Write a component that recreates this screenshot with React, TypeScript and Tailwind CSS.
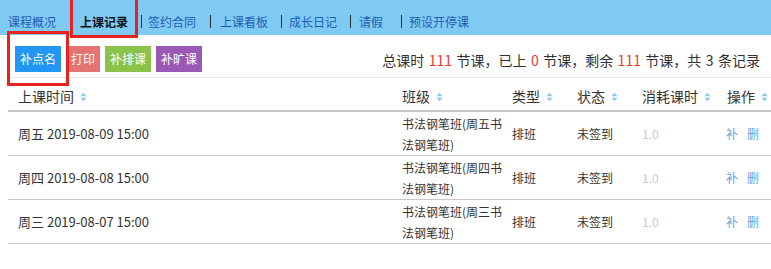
import React from 'react';

interface LessonRow {
  time: string;
  klass: [string, string];
  kind: string;
  status: string;
  hours: string;
}

const rows: LessonRow[] = [
  { time: '周五 2019-08-09 15:00', klass: ['书法钢笔班(周五书', '法钢笔班)'], kind: '排班', status: '未签到', hours: '1.0' },
  { time: '周四 2019-08-08 15:00', klass: ['书法钢笔班(周四书', '法钢笔班)'], kind: '排班', status: '未签到', hours: '1.0' },
  { time: '周三 2019-08-07 15:00', klass: ['书法钢笔班(周三书', '法钢笔班)'], kind: '排班', status: '未签到', hours: '1.0' },
];

function SortIcon() {
  return (
    <svg width="7" height="10" viewBox="0 0 7 10" className="ml-[6px] mt-[1px] shrink-0">
      <path d="M3.5 0.8 L6.6 4.2 H0.4 Z" fill="#8fcbea" />
      <path d="M3.5 9.2 L6.6 5.8 H0.4 Z" fill="#8fcbea" />
    </svg>
  );
}

function Sep({ className }: { className: string }) {
  return <div className={`w-px h-[13px] bg-[#2b2b2b] ${className}`} />;
}

export default function App() {
  return (
    <div className="relative w-[771px] h-[269px] overflow-hidden bg-white font-['Noto_Sans_CJK_SC','Microsoft_YaHei',sans-serif] text-[#333]">
      {/* tabs */}
      <div className="h-[35px] bg-[#7ecaf3] flex items-center pt-[8px] text-[12px] text-[#1e5db3] whitespace-nowrap">
        <span className="ml-[8px]">课程概况</span>
        <span className="ml-[24px] font-bold text-[#111]">上课记录</span>
        <Sep className="ml-[13px]" />
        <span className="ml-[6px]">签约合同</span>
        <Sep className="ml-[14px]" />
        <span className="ml-[9px]">上课看板</span>
        <Sep className="ml-[13px]" />
        <span className="ml-[7px]">成长日记</span>
        <Sep className="ml-[13px]" />
        <span className="ml-[8px]">请假</span>
        <Sep className="ml-[18px]" />
        <span className="ml-[7px]">预设开停课</span>
      </div>

      {/* toolbar */}
      <div className="h-[42px] flex items-start pt-[11px] pl-[15px] pr-[11px]">
        <div className="flex gap-[5px] text-[12px] text-white">
          <button type="button" className="h-[26px] px-[5px] leading-[26px] bg-[#2196f3]">补点名</button>
          <button type="button" className="h-[26px] px-[5px] leading-[26px] bg-[#e57373]">打印</button>
          <button type="button" className="h-[26px] px-[5px] leading-[26px] bg-[#8bc34a]">补排课</button>
          <button type="button" className="h-[26px] px-[5px] leading-[26px] bg-[#9b59b6]">补旷课</button>
        </div>
        <p className="ml-auto mt-[1px] text-[14px] leading-[26px] whitespace-nowrap [word-spacing:1.3px]">
          总课时 <span className="text-[#e53935]">111</span> 节课，已上 <span className="text-[#e53935]">0</span> 节课，剩余{' '}
          <span className="text-[#e53935]">111</span> 节课，共 3 条记录
        </p>
      </div>

      {/* table */}
      <div className="ml-[8px] w-[790px] border-t border-[#e6e6e6]">
        <div className="h-[34px] pt-[4px] flex items-center border-b-2 border-[#c6c6c6] text-[14px] whitespace-nowrap">
          <div className="w-[384px] pl-[10px] flex items-center">上课时间<SortIcon /></div>
          <div className="w-[110px] pl-[10px] flex items-center">班级<SortIcon /></div>
          <div className="w-[65px] pl-[10px] flex items-center">类型<SortIcon /></div>
          <div className="w-[65px] pl-[10px] flex items-center">状态<SortIcon /></div>
          <div className="w-[85px] pl-[10px] flex items-center">消耗课时<SortIcon /></div>
          <div className="w-[80px] pl-[10px] flex items-center">操作<SortIcon /></div>
        </div>
        {rows.map((r) => (
          <div key={r.time} className="h-[44px] flex items-center border-b border-[#c8c8c8] text-[12px] whitespace-nowrap">
            <div className="w-[384px] pl-[10px] text-[13px]">{r.time}</div>
            <div className="w-[110px] pl-[10px] leading-[21px]">
              <div>{r.klass[0]}</div>
              <div>{r.klass[1]}</div>
            </div>
            <div className="w-[65px] pl-[10px]">{r.kind}</div>
            <div className="w-[65px] pl-[10px]">{r.status}</div>
            <div className="w-[85px] pl-[10px] text-[#c9c9c9]">{r.hours}</div>
            <div className="w-[80px] pl-[9px] flex gap-[9px] text-[#6a9fe0]">
              <span>补</span>
              <span>删</span>
            </div>
          </div>
        ))}
      </div>

      {/* annotation boxes */}
      <div className="absolute left-[70px] top-[-4px] w-[68px] h-[42px] border-[3px] border-[#e8221e]" />
      <div className="absolute left-[7px] top-[31px] w-[62px] h-[55px] border-[3px] border-[#e8221e]" />
    </div>
  );
}
